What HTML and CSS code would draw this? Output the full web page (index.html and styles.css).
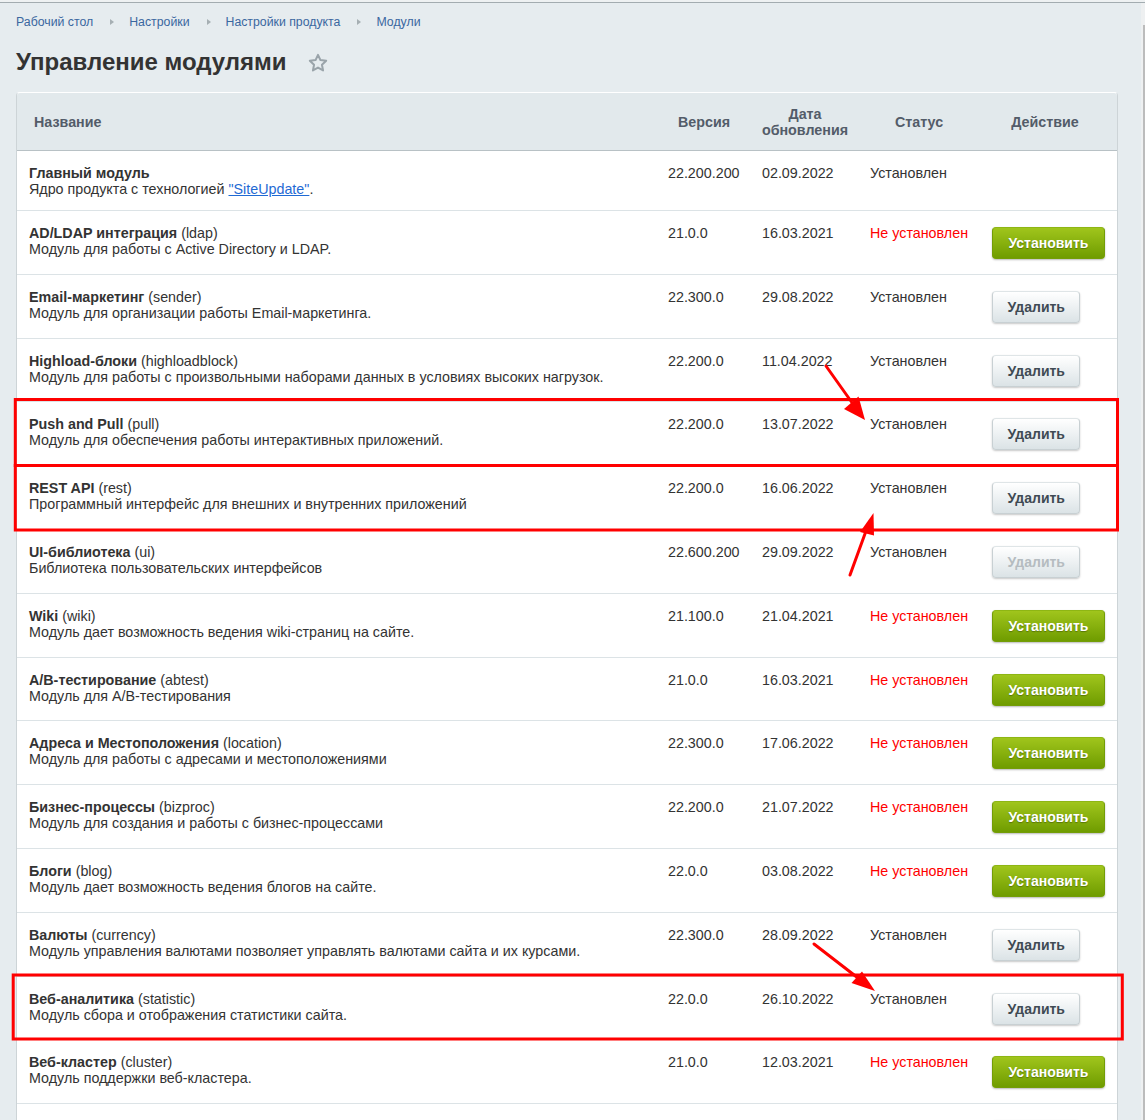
FILE: index.html
```html
<!DOCTYPE html>
<html lang="ru">
<head>
<meta charset="utf-8">
<title>Управление модулями</title>
<link rel="stylesheet" href="styles.css">
</head>
<body>
<div class="topline"></div>
<div class="frame">
  <div class="main">
    <nav class="crumbs">
      <a href="#">Рабочий стол</a><span class="sep"></span>
      <a href="#">Настройки</a><span class="sep"></span>
      <a href="#">Настройки продукта</a><span class="sep"></span>
      <a href="#">Модули</a>
    </nav>
    <h1 class="title">Управление модулями
      <svg class="star" width="20" height="20" viewBox="0 0 20 20"><path d="M10 1.8l2.45 5.25 5.75.7-4.25 3.95 1.1 5.7L10 14.6l-5.05 2.8 1.1-5.7L1.8 7.75l5.75-.7z" fill="none" stroke="#9aa4aa" stroke-width="2" stroke-linejoin="round"/></svg>
    </h1>
    <div class="card">
      <table class="list">
        <colgroup>
          <col class="c-name"><col class="c-ver"><col class="c-date"><col class="c-status"><col class="c-act">
        </colgroup>
        <thead>
          <tr>
            <th class="h-name">Название</th>
            <th>Версия</th>
            <th>Дата<br>обновления</th>
            <th>Статус</th>
            <th class="h-act">Действие</th>
          </tr>
        </thead>
        <tbody>
          <tr class="short"><td><b>Главный модуль</b><br>Ядро продукта с технологией <a href="#" class="lnk">"SiteUpdate"</a>.</td><td>22.200.200</td><td class="d">02.09.2022</td><td>Установлен</td><td></td></tr>
          <tr><td><b>AD/LDAP интеграция</b> (ldap)<br>Модуль для работы с Active Directory и LDAP.</td><td>21.0.0</td><td class="d">16.03.2021</td><td class="no">Не установлен</td><td><button class="btn green">Установить</button></td></tr>
          <tr><td><b>Email-маркетинг</b> (sender)<br>Модуль для организации работы Email-маркетинга.</td><td>22.300.0</td><td class="d">29.08.2022</td><td>Установлен</td><td><button class="btn gray">Удалить</button></td></tr>
          <tr><td><b>Highload-блоки</b> (highloadblock)<br>Модуль для работы с произвольными наборами данных в условиях высоких нагрузок.</td><td>22.200.0</td><td class="d">11.04.2022</td><td>Установлен</td><td><button class="btn gray">Удалить</button></td></tr>
          <tr><td><b>Push and Pull</b> (pull)<br>Модуль для обеспечения работы интерактивных приложений.</td><td>22.200.0</td><td class="d">13.07.2022</td><td>Установлен</td><td><button class="btn gray">Удалить</button></td></tr>
          <tr><td><b>REST API</b> (rest)<br>Программный интерфейс для внешних и внутренних приложений</td><td>22.200.0</td><td class="d">16.06.2022</td><td>Установлен</td><td><button class="btn gray">Удалить</button></td></tr>
          <tr><td><b>UI-библиотека</b> (ui)<br>Библиотека пользовательских интерфейсов</td><td>22.600.200</td><td class="d">29.09.2022</td><td>Установлен</td><td><button class="btn gray" disabled>Удалить</button></td></tr>
          <tr><td><b>Wiki</b> (wiki)<br>Модуль дает возможность ведения wiki-страниц на сайте.</td><td>21.100.0</td><td class="d">21.04.2021</td><td class="no">Не установлен</td><td><button class="btn green">Установить</button></td></tr>
          <tr><td><b>A/B-тестирование</b> (abtest)<br>Модуль для A/B-тестирования</td><td>21.0.0</td><td class="d">16.03.2021</td><td class="no">Не установлен</td><td><button class="btn green">Установить</button></td></tr>
          <tr><td><b>Адреса и Местоположения</b> (location)<br>Модуль для работы с адресами и местоположениями</td><td>22.300.0</td><td class="d">17.06.2022</td><td class="no">Не установлен</td><td><button class="btn green">Установить</button></td></tr>
          <tr><td><b>Бизнес-процессы</b> (bizproc)<br>Модуль для создания и работы с бизнес-процессами</td><td>22.200.0</td><td class="d">21.07.2022</td><td class="no">Не установлен</td><td><button class="btn green">Установить</button></td></tr>
          <tr><td><b>Блоги</b> (blog)<br>Модуль дает возможность ведения блогов на сайте.</td><td>22.0.0</td><td class="d">03.08.2022</td><td class="no">Не установлен</td><td><button class="btn green">Установить</button></td></tr>
          <tr><td><b>Валюты</b> (currency)<br>Модуль управления валютами позволяет управлять валютами сайта и их курсами.</td><td>22.300.0</td><td class="d">28.09.2022</td><td>Установлен</td><td><button class="btn gray">Удалить</button></td></tr>
          <tr><td><b>Веб-аналитика</b> (statistic)<br>Модуль сбора и отображения статистики сайта.</td><td>22.0.0</td><td class="d">26.10.2022</td><td>Установлен</td><td><button class="btn gray">Удалить</button></td></tr>
          <tr><td><b>Веб-кластер</b> (cluster)<br>Модуль поддержки веб-кластера.</td><td>21.0.0</td><td class="d">12.03.2021</td><td class="no">Не установлен</td><td><button class="btn green">Установить</button></td></tr>
          <tr><td><b>Веб-мессенджер</b> (im)<br>Модуль обмена мгновенными сообщениями.</td><td>22.200.0</td><td class="d">14.09.2022</td><td>Установлен</td><td><button class="btn gray">Удалить</button></td></tr>
        </tbody>
      </table>
    </div>
  </div>
  <div class="scroll"><div class="thumb"></div></div>
</div>
<svg class="marks" width="1145" height="1120" viewBox="0 0 1145 1120">
  <g fill="none" stroke="#ff0000" stroke-width="3">
    <rect x="15.3" y="399.5" width="1102.2" height="66"/>
    <rect x="15.3" y="465.5" width="1102.2" height="64.5"/>
    <rect x="13.2" y="975" width="1109.1" height="64"/>
  </g>
  <g stroke="#ff0000" stroke-width="3" stroke-linecap="round">
    <line x1="826" y1="366" x2="853" y2="404"/>
    <line x1="850" y1="575" x2="866" y2="531"/>
    <line x1="814" y1="944" x2="858" y2="978"/>
  </g>
  <g fill="#ff0000">
    <polygon points="865,420 844,409 858.5,396.5"/>
    <polygon points="873.5,513 860,532 874,535.5"/>
    <polygon points="875,991 851.5,983 862,971.5"/>
  </g>
</svg>
</body>
</html>
```
FILE: styles.css
```css
html, body {
  margin: 0;
  padding: 0;
}
body {
  background: #e6ecef;
  font-family: "Liberation Sans", Arial, sans-serif;
  color: #333;
  position: relative;
  height: 1120px;
  overflow: hidden;
}
.topline {
  height: 2px;
  background: #eef1f2;
  border-bottom: 1px solid #a3acb0;
}
.frame {
  display: flex;
  align-items: stretch;
}
.main {
  flex: 1;
  padding: 11px 23px 0 16px;
}
.scroll {
  width: 4px;
  display: flex;
  flex-direction: column;
  background: #eef0f1;
}
.thumb {
  margin-top: 22px;
  margin-left: 2px;
  height: 1100px;
  background: #bcbcbc;
}
.crumbs {
  display: flex;
  align-items: center;
  height: 16px;
  font-size: 12.3px;
}
.crumbs a {
  color: #3a67a0;
  text-decoration: none;
}
.sep {
  width: 36px;
  display: flex;
  justify-content: center;
}
.sep::before {
  content: "";
  width: 0;
  height: 0;
  border-left: 4px solid #a6afb3;
  border-top: 3.5px solid transparent;
  border-bottom: 3.5px solid transparent;
  margin-left: 2px;
}
.title {
  margin: 18px 0 16px;
  font-size: 24px;
  line-height: 28px;
  font-weight: bold;
  color: #333;
  display: flex;
  align-items: center;
  gap: 21px;
}
.star {
  margin-top: 2px;
}
.card {
  background: #fff;
  border: 1px solid #cdd4d7;
  border-top-color: #fff;
  border-radius: 4px 4px 0 0;
  overflow: hidden;
}
.list {
  width: 100%;
  border-collapse: collapse;
  table-layout: fixed;
  font-size: 14.3px;
  line-height: 16px;
}
.c-name { width: 639px; }
.c-ver { width: 96px; }
.c-date { width: 106px; }
.c-status { width: 122px; }
.c-act { width: auto; }
.list th {
  background: #e2e9ec;
  height: 57px;
  padding: 0 6px;
  font-weight: bold;
  color: #535c69;
  text-align: center;
  vertical-align: middle;
  border-bottom: 1px solid #b8c1c5;
}
.list th.h-name {
  text-align: left;
  padding-left: 17px;
}
.list th.h-act {
  padding-right: 13px;
}
.list td {
  padding: 14px 8px 13px 12px;
  vertical-align: top;
  border-bottom: 1px solid #dce3e6;
  color: #333;
}
.list td.d {
  padding-left: 10px;
}
.list td b {
  font-weight: bold;
}
.list td.no {
  color: #ff0000;
}
.lnk {
  color: #1f6ad4;
  text-decoration: underline;
}
.btn {
  display: block;
  height: 32px;
  margin: 2px 0 1.8px;
  padding: 0 15.5px;
  border-radius: 4px;
  font-family: "Liberation Sans", Arial, sans-serif;
  font-size: 14px;
  font-weight: bold;
  cursor: pointer;
}
.btn.green {
  color: #fff;
  background: linear-gradient(#a0c51c, #6f9c00);
  border: 1px solid #739d07;
  border-top-color: #8eb614;
  text-shadow: 0 1px 1px rgba(0, 0, 0, 0.3);
  box-shadow: 0 1px 2px rgba(0, 0, 0, 0.28);
}
.btn.gray {
  color: #3f4b54;
  background: linear-gradient(#ffffff, #dbe3e6);
  border: 1px solid #c8d0d3;
  border-top-color: #dfe5e7;
  box-shadow: 0 1px 2px rgba(0, 0, 0, 0.22);
  padding: 0 14.5px;
}
.btn.gray:disabled {
  color: #b5bcc0;
  cursor: default;
}
.marks {
  position: absolute;
  left: 0;
  top: 0;
  pointer-events: none;
}
```
